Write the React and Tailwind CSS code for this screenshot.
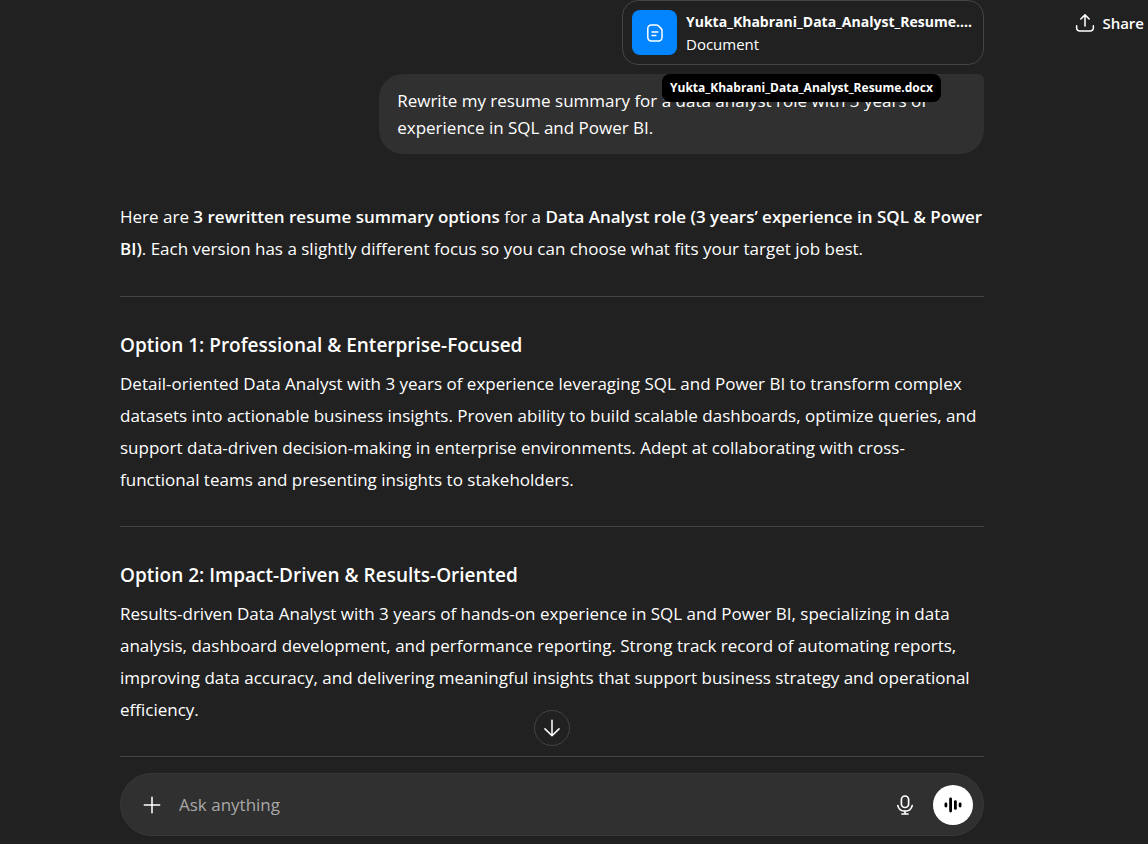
import React, { useState } from "react";

const options = [
  {
    title: "Option 1: Professional & Enterprise-Focused",
    text: "Detail-oriented Data Analyst with 3 years of experience leveraging SQL and Power BI to transform complex datasets into actionable business insights. Proven ability to build scalable dashboards, optimize queries, and support data-driven decision-making in enterprise environments. Adept at collaborating with cross-functional teams and presenting insights to stakeholders.",
  },
  {
    title: "Option 2: Impact-Driven & Results-Oriented",
    text: "Results-driven Data Analyst with 3 years of hands-on experience in SQL and Power BI, specializing in data analysis, dashboard development, and performance reporting. Strong track record of automating reports, improving data accuracy, and delivering meaningful insights that support business strategy and operational efficiency.",
  },
];

const Icon = ({ size = 20, children, width = 1.4 }) => (
  <svg
    width={size}
    height={size}
    viewBox="0 0 20 20"
    fill="none"
    stroke="currentColor"
    strokeWidth={width}
    strokeLinecap="round"
    strokeLinejoin="round"
    aria-hidden="true"
  >
    {children}
  </svg>
);

const Attachment = () => (
  <div className="relative">
    <button
      type="button"
      className="flex w-[362px] max-w-full items-center gap-[9px] rounded-2xl border border-[#444444] py-[9px] pr-1 pl-[9px] text-left"
    >
      <span className="flex size-[45px] shrink-0 items-center justify-center rounded-lg bg-[#0285ff]">
        <Icon width={1.5}>
          <path d="M6.2 2H11.2Q12.6 2 13.6 3L16 5.4Q17 6.4 17 7.8V14.6A3.4 3.4 0 0 1 13.6 18H6.2A3.4 3.4 0 0 1 2.8 14.6V5.4A3.4 3.4 0 0 1 6.2 2Z" />
          <path d="M7 9H12.8M7 12.6H10.8" />
        </Icon>
      </span>
      <span className="min-w-0 text-[15px] leading-[22px]">
        <span className="block truncate text-[14px] font-bold">
          Yukta_Khabrani_Data_Analyst_Resume.docx
        </span>
        <span className="block">Document</span>
      </span>
    </button>
    {/* Tooltip */}
    <span
      role="tooltip"
      className="absolute top-full left-10 z-10 mt-[9px] rounded-lg bg-black px-2 py-1 text-[12px] leading-5 font-bold whitespace-nowrap"
    >
      Yukta_Khabrani_Data_Analyst_Resume.docx
    </span>
  </div>
);

const Composer = () => {
  const [message, setMessage] = useState("");

  return (
    <form
      className="relative mt-4 flex h-[63px] items-center rounded-full border border-[#383838] bg-[#303030] pr-[10px] pl-5"
      onSubmit={(e) => e.preventDefault()}
    >
      {/* Scroll to bottom */}
      <button
        type="button"
        aria-label="Scroll to bottom"
        className="absolute bottom-full left-1/2 mb-7 flex size-9 -translate-x-1/2 items-center justify-center rounded-full border border-[#444444] bg-[#212121]"
      >
        <Icon size={22}>
          <path d="M10 3V17M3.6 10.8L10 17L16.4 10.8" />
        </Icon>
      </button>

      <button type="button" aria-label="Add files" className="mr-4">
        <Icon size={22}>
          <path d="M10 3V17M3 10H17" />
        </Icon>
      </button>
      <input
        type="text"
        aria-label="Ask anything"
        placeholder="Ask anything"
        value={message}
        onChange={(e) => setMessage(e.target.value)}
        className="min-w-0 flex-1 bg-transparent text-[17px] placeholder:text-[#a8a8a8] focus:outline-none"
      />
      <button type="button" aria-label="Dictate" className="mr-4">
        <Icon size={24}>
          <rect x="7" y="2.5" width="6" height="9.6" rx="3" />
          <path d="M4 10.5A6.2 6.2 0 0 0 16 10.5M10 14.8V17.5M7.5 17.5H12.5" />
        </Icon>
      </button>
      <button
        type="button"
        aria-label="Use voice"
        className="flex size-10 items-center justify-center rounded-full bg-white text-black"
      >
        <Icon width={2.8}>
          <path d="M2.9 8.9V11.1M7.6 4V16M12.4 6.6V13.4M17.1 8.9V11.1" />
        </Icon>
      </button>
    </form>
  );
};

const App = () => {
  return (
    <div className="relative min-h-screen bg-[#212121] font-['Open_Sans',sans-serif] text-[17px] leading-8 text-white">
      <button
        type="button"
        className="absolute top-[7px] right-1 flex items-center gap-[6px] text-[15px] font-semibold"
      >
        <Icon size={22}>
          <path d="M10 12.8V2.8M6.2 6.4L10 2.6L13.8 6.4M2.4 12.5V14.5A2.8 2.8 0 0 0 5.2 17.3H14.8A2.8 2.8 0 0 0 17.6 14.5V12.5" />
        </Icon>
        Share
      </button>

      <div className="pr-11">
        <main className="mx-auto max-w-[864px] pb-[7px]">
          {/* User message */}
          <div className="flex flex-col items-end gap-[9px]">
            <Attachment />
            <p className="max-w-[70%] rounded-3xl rounded-tr-md bg-[#303030] px-[18px] py-[13px] leading-[27px]">
              Rewrite my resume summary for a data analyst role with 3 years of
              experience in SQL and Power BI.
            </p>
          </div>

          {/* Answer */}
          <p className="mt-[47px]">
            Here are{" "}
            <strong className="font-semibold">
              3 rewritten resume summary options
            </strong>{" "}
            for a{" "}
            <strong className="font-semibold">
              Data Analyst role (3 years’ experience in SQL &amp; Power BI)
            </strong>
            . Each version has a slightly different focus so you can choose what
            fits your target job best.
          </p>
          <hr className="mt-[31px] border-[#444444]" />
          {options.map((option) => (
            <section key={option.title}>
              <h3 className="mt-[34px] text-[19px] leading-7 font-semibold">
                {option.title}
              </h3>
              <p className="mt-[9px]">{option.text}</p>
              <hr className="mt-[30px] border-[#444444]" />
            </section>
          ))}

          <Composer />
        </main>
      </div>
    </div>
  );
};

export default App;
